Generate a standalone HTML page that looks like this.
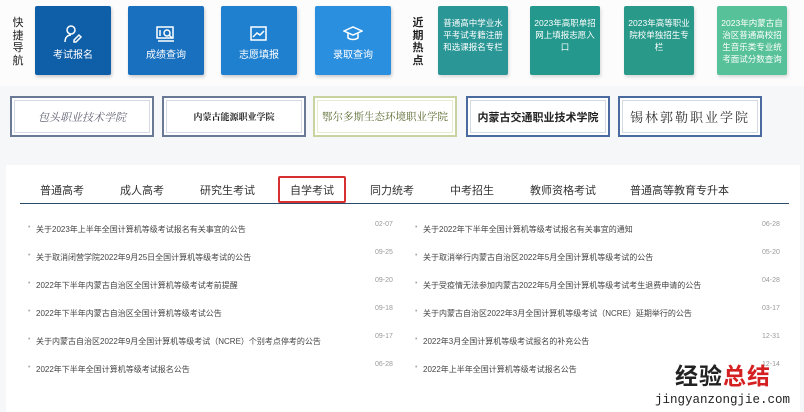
<!DOCTYPE html>
<html><head><meta charset="utf-8"><style>
*{margin:0;padding:0;box-sizing:border-box}
body{width:804px;height:412px;background:#f6f7f9;font-family:"Liberation Sans","Noto Sans CJK SC",sans-serif;position:relative;overflow:hidden}
.top{position:absolute;left:0;top:0;width:804px;height:86px;background:#fcfcfd}
.abs{position:absolute}
.vt{position:absolute;font-size:11px;line-height:12.5px;width:14px;color:#222;text-align:center}
.nb{position:absolute;top:6px;width:76px;height:69px;border-radius:2px;color:#fff;font-size:10px;text-align:center;box-shadow:1px 2px 3px rgba(0,0,0,.2)}
.nb svg{position:absolute;left:28px;top:19px}
.nb span{position:absolute;left:0;right:0;top:40px}
.hb{position:absolute;top:6px;width:70px;height:69px;border-radius:2px;color:#fff;font-size:8.5px;line-height:12px;text-align:center;padding:11px 3px 0;box-shadow:1px 2px 3px rgba(0,0,0,.15)}
.lg{position:absolute;top:96px;width:144px;height:41px;background:#fff;border:2px solid #6a7a96;outline:1px solid #d4d9e4;outline-offset:-5px;display:flex;align-items:center;justify-content:center;font-size:11px;font-family:"Noto Serif CJK SC",serif}
.card{position:absolute;left:6px;top:165px;width:794px;height:247px;background:#fff}
.tab{position:absolute;top:182px;font-size:11px;color:#333}
.li{position:absolute;font-size:8px;color:#444;white-space:nowrap}
.li:before{content:"•";color:#aaa;position:absolute;left:-8px;font-size:7px}
.dt{position:absolute;font-size:7px;color:#999}
</style></head><body>
<div class="top"></div>
<div class="vt" style="left:11px;top:17px">快<br>捷<br>导<br>航</div>
<div class="nb" style="left:35px;background:#0f5ea8"><svg width="20" height="18" viewBox="0 0 20 18" fill="none" stroke="#fff" stroke-width="1.5"><circle cx="8" cy="5" r="4"/><path d="M2 17c0-5 3-7 6-7M11 15l5-5 2 2-5 5h-2z"/></svg><span>考试报名</span></div>
<div class="nb" style="left:128px;background:#1870bf"><svg width="20" height="18" viewBox="0 0 20 18" fill="none" stroke="#fff" stroke-width="1.5"><rect x="1" y="2" width="16" height="11"/><circle cx="11" cy="8" r="3"/><path d="M13 10l3 3M4 5v6M2 16h16"/></svg><span>成绩查询</span></div>
<div class="nb" style="left:221px;background:#1f80cf"><svg width="20" height="18" viewBox="0 0 20 18" fill="none" stroke="#fff" stroke-width="1.5"><rect x="2" y="2" width="15" height="13"/><path d="M4 12l4-4 3 2 4-4"/></svg><span>志愿填报</span></div>
<div class="nb" style="left:315px;background:#2a8fdf"><svg width="20" height="18" viewBox="0 0 20 18" fill="none" stroke="#fff" stroke-width="1.5"><path d="M1 6l9-4 9 4-9 4z"/><path d="M5 8v5c3 2 7 2 10 0V8"/></svg><span>录取查询</span></div>
<div class="vt" style="left:411px;top:17px;font-weight:bold">近<br>期<br>热<br>点</div>
<div class="hb" style="left:438px;background:#2b9696">普通高中学业水平考试考籍注册和选课报名专栏</div>
<div class="hb" style="left:530px;background:#24988c">2023年高职单招网上填报志愿入口</div>
<div class="hb" style="left:624px;background:#29998a">2023年高等职业院校单独招生专栏</div>
<div class="hb" style="left:717px;background:#57c199;padding-top:11px">2023年内蒙古自治区普通高校招生音乐类专业统考面试分数查询</div>
<div class="lg" style="left:10px;color:#667;font-style:italic">包头职业技术学院</div>
<div class="lg" style="left:162px;color:#222;font-size:9px;font-weight:bold">内蒙古能源职业学院</div>
<div class="lg" style="left:313px;border-color:#c8d4a0;outline-color:#e6ecd0;color:#5a6a30;font-size:10.5px">鄂尔多斯生态环境职业学院</div>
<div class="lg" style="left:466px;border-color:#4a6aa0;color:#222;font-weight:bold;font-size:11px;font-family:'Noto Sans CJK SC',sans-serif">内蒙古交通职业技术学院</div>
<div class="lg" style="left:618px;border-color:#4a6aa0;color:#333;font-size:13px;letter-spacing:2px">锡林郭勒职业学院</div>
<div class="card"></div>
<div class="tab" style="left:40px">普通高考</div>
<div class="tab" style="left:120px">成人高考</div>
<div class="tab" style="left:200px">研究生考试</div>
<div class="abs" style="left:278px;top:176px;width:68px;height:27px;border:2px solid #d83030;border-radius:2px"></div>
<div class="tab" style="left:290px">自学考试</div>
<div class="tab" style="left:370px">同力统考</div>
<div class="tab" style="left:450px">中考招生</div>
<div class="tab" style="left:530px">教师资格考试</div>
<div class="tab" style="left:630px">普通高等教育专升本</div>
<div class="abs" style="left:20px;top:203px;width:769px;height:1px;background:#2a4a6a"></div>
<div class="li" style="left:36px;top:224px">关于2023年上半年全国计算机等级考试报名有关事宜的公告</div>
<div class="li" style="left:36px;top:252px">关于取消闭营学院2022年9月25日全国计算机等级考试的公告</div>
<div class="li" style="left:36px;top:280px">2022年下半年内蒙古自治区全国计算机等级考试考前提醒</div>
<div class="li" style="left:36px;top:308px">2022年下半年内蒙古自治区全国计算机等级考试公告</div>
<div class="li" style="left:36px;top:336px">关于内蒙古自治区2022年9月全国计算机等级考试（NCRE）个别考点停考的公告</div>
<div class="li" style="left:36px;top:364px">2022年下半年全国计算机等级考试报名公告</div>
<div class="dt" style="left:375px;top:221px">02-07</div>
<div class="dt" style="left:375px;top:249px">09-25</div>
<div class="dt" style="left:375px;top:277px">09-20</div>
<div class="dt" style="left:375px;top:305px">09-18</div>
<div class="dt" style="left:375px;top:333px">09-17</div>
<div class="dt" style="left:375px;top:361px">06-28</div>
<div class="li" style="left:423px;top:224px">关于2022年下半年全国计算机等级考试报名有关事宜的通知</div>
<div class="li" style="left:423px;top:252px">关于取消举行内蒙古自治区2022年5月全国计算机等级考试的公告</div>
<div class="li" style="left:423px;top:280px">关于受疫情无法参加内蒙古2022年5月全国计算机等级考试考生退费申请的公告</div>
<div class="li" style="left:423px;top:308px">关于内蒙古自治区2022年3月全国计算机等级考试（NCRE）延期举行的公告</div>
<div class="li" style="left:423px;top:336px">2022年3月全国计算机等级考试报名的补充公告</div>
<div class="li" style="left:423px;top:364px">2022年上半年全国计算机等级考试报名公告</div>
<div class="dt" style="left:762px;top:221px">06-28</div>
<div class="dt" style="left:762px;top:249px">05-20</div>
<div class="dt" style="left:762px;top:277px">04-28</div>
<div class="dt" style="left:762px;top:305px">03-17</div>
<div class="dt" style="left:762px;top:333px">12-31</div>
<div class="dt" style="left:762px;top:361px">12-14</div>
<div class="abs" style="left:675px;top:362px;font-size:23px;font-weight:bold;line-height:28px;letter-spacing:1px"><span style="color:#222">经验</span><span style="color:#d42020">总结</span></div>
<div class="abs" style="left:655px;top:393px;font-size:12.5px;line-height:15px;color:#222;font-family:'Liberation Mono',monospace">jingyanzongjie.com</div>
</body></html>
